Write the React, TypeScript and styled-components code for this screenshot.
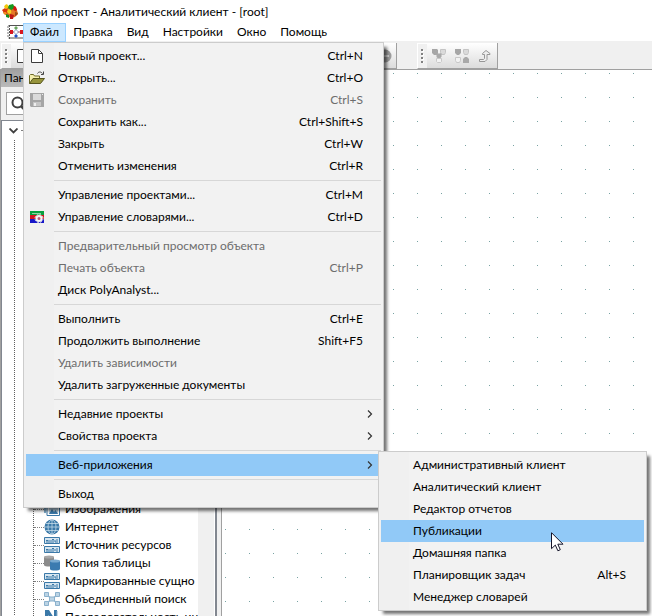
import React from "react";
import styled, { createGlobalStyle, css } from "styled-components";

const GlobalStyle = createGlobalStyle`
  *, *::before, *::after { box-sizing: border-box; }
  body {
    margin: 0;
    overflow: hidden;
    background: #fff;
    color: #000;
    font-family: Lato, "Open Sans", "Noto Sans", sans-serif;
    font-size: 12px;
    line-height: 18px;
  }
  button, input { font: inherit; color: inherit; }
  svg { display: block; flex: none; }
`;

const Window = styled.div`
  display: flex;
  flex-direction: column;
  height: 100vh;
`;

const TitleBar = styled.header`
  display: flex;
  align-items: center;
  gap: 4px;
  height: 23px;
  padding-left: 2px;
  background: #fff;
`;

const Title = styled.h1`
  margin: 0;
  font-size: 12px;
  font-weight: 400;
  white-space: nowrap;
`;

const MenuBar = styled.nav`
  display: flex;
  align-items: center;
  height: 18px;
  padding-left: 7px;
  background: #fff;
`;

const MenuHolder = styled.div`
  position: relative;
`;

const MenuBarButton = styled.button<{ $open?: boolean }>`
  display: block;
  height: 19px;
  padding: 0 6px;
  border: 1px solid ${(p) => (p.$open ? "#99d1ff" : "transparent")};
  background: ${(p) => (p.$open ? "#cce8ff" : "transparent")};
  line-height: 16px;
  white-space: nowrap;
`;

const menuSurface = css`
  position: absolute;
  padding: 2px;
  border: 1px solid #ccc;
  background: linear-gradient(to right, #f0f0f0 30px, #f2f2f2 30px);
  box-shadow: 4px 4px 3px -1px rgba(0, 0, 0, 0.55);
`;

const FileMenu = styled.div`
  ${menuSurface}
  z-index: 2;
  top: 100%;
  left: 0;
  width: 361px;
`;

const SubMenu = styled.div`
  ${menuSurface}
  top: -3px;
  left: calc(100% - 3px);
  width: 269px;
`;

const ItemHolder = styled.div`
  position: relative;
`;

const MenuItem = styled.button<{ $active?: boolean }>`
  display: grid;
  grid-template-columns: 22px 1fr auto;
  column-gap: 10px;
  align-items: center;
  width: 100%;
  height: 22px;
  padding: 0 18px 0 0;
  border: 0;
  background: ${(p) => (p.$active ? "#91c9f7" : "transparent")};
  text-align: left;
  white-space: nowrap;

  &:disabled { color: #6d6d6d; }
`;

const ItemIcon = styled.span`
  display: flex;
  justify-content: center;
`;

const ItemArrow = styled.span`
  display: flex;
  justify-content: flex-end;
  margin-right: -10px;
`;

const Separator = styled.hr`
  height: 1px;
  margin: 3px 0 3px 28px;
  border: 0;
  background: #d7d7d7;
`;

const Pointer = styled.svg`
  position: absolute;
  z-index: 3;
  top: 12px;
  left: 170px;
  pointer-events: none;
`;

const ToolArea = styled.div`
  display: flex;
  gap: 20px;
  height: 29px;
  padding: 2px 0 0 1px;
  border-bottom: 1px solid #a0a0a0;
  background: #f0f0f0;
`;

const ToolBar = styled.div<{ $main?: boolean }>`
  display: flex;
  align-items: center;
  width: ${(p) => (p.$main ? "396px" : "81px")};
  border-right: 1px solid #a0a0a0;
  border-bottom: 1px solid #a0a0a0;
  border-left: 1px solid #fff;
  background: linear-gradient(#fff, #dcdcdc);
`;

const Grip = styled.div`
  display: flex;
  justify-content: center;
  align-items: center;
  width: 9px;
  height: 24px;
  background: #f0f0f0;
`;

const ToolButton = styled.button<{ $last?: boolean }>`
  display: flex;
  align-items: center;
  justify-content: center;
  width: 23px;
  height: 22px;
  margin-left: ${(p) => (p.$last ? "auto" : "0")};
  padding: 0;
  border: 0;
  background: transparent;
`;

const Workspace = styled.main`
  display: flex;
  flex: 1;
  min-height: 0;
`;

const Dock = styled.aside`
  display: flex;
  flex-direction: column;
  flex: none;
  width: 222px;
  background: #f0f0f0;
  border-left: 1px solid #a0a0a0;
  border-right: 1px solid #a0a0a0;
`;

const DockTitle = styled.h2`
  height: 17px;
  margin: 0;
  padding-left: 3px;
  background: linear-gradient(#a2a2a2, #bababa);
  font-size: 12px;
  font-weight: 400;
  line-height: 16px;
`;

const SearchBox = styled.label`
  display: flex;
  align-items: center;
  height: 23px;
  margin: 5px 8px 5px 5px;
  padding-left: 4px;
  border: 1px solid #a0a0a0;
  background: #fff;
`;

const SearchInput = styled.input`
  flex: 1;
  min-width: 0;
  border: 0;
  outline: 0;
  background: transparent;
`;

const TreeFrame = styled.div`
  display: flex;
  flex: 1;
  min-height: 0;
  margin-right: 4px;
  border: 1px solid #828790;
  border-right-width: 2px;
  border-bottom: 0;
`;

const Tree = styled.div`
  flex: 1;
  min-width: 0;
  overflow: hidden;
  background: #fff;
`;

const TreeRoot = styled.div`
  display: flex;
  align-items: center;
  gap: 3px;
  height: 19px;
  padding-left: 7px;
`;

const RootLine = styled.div`
  height: 1px;
  width: 12px;
  border-top: 1px dotted #808080;
`;

const Branch = styled.div`
  height: 100%;
  margin-left: 12px;
  padding-left: 18px;
  border-left: 1px dotted #606060;
`;

const Leaves = styled.ul`
  margin: 0;
  padding: 360px 0 0;
  border-left: 1px dotted #606060;
  list-style: none;
`;

const Leaf = styled.li`
  display: flex;
  align-items: center;
  height: 18px;
  white-space: nowrap;

  &::before {
    content: "";
    flex: none;
    width: 10px;
    border-top: 1px dotted #808080;
  }
`;

const LeafText = styled.span`
  margin-left: 5px;
`;

const ScrollTrack = styled.div`
  flex: none;
  width: 17px;
  background: #f0f0f0;
  border-right: 1px solid #fff;
`;

const Canvas = styled.section`
  flex: 1;
  background-color: #fff;
  background-image: conic-gradient(from 0deg at 1px 1px, transparent 75%, #78a3a3 0);
  background-position: 3px 3px;
  background-size: 24px 24px;
`;

const AppLogo = () => (
  <svg width="17" height="16" viewBox="0 0 17 16" aria-hidden="true">
    <path d="M5 3l3-2 5 1 2 4 1 4-3 3-4 1-4-2-4-3z" fill="#d86a20" />
    <path d="M0 6l3-2 3 2-1 4-3-1z" fill="#d8380c" />
    <path d="M1 8h3l1 2-2 1z" fill="#f08a20" />
    <path d="M3 1 5 0l2 3-3 2-2-2z" fill="#f2c80c" />
    <path d="M7 1l4-1 2 4-4 2-3-2z" fill="#179a20" />
    <path d="M12 2l2 1 1 3-2 1-2-2z" fill="#d41414" />
    <path d="M6 5l3 1 1 3-3 1-2-2z" fill="#f4d020" />
    <path d="M10 6l3 1 1 3-3 1-2-2z" fill="#e87828" />
    <path d="M4 10l3 1v3l-3-1z" fill="#168c20" />
    <path d="M8 10l4 1-1 4H8z" fill="#c01818" />
    <path d="M13 8l3 1-1 2-2 1z" fill="#9a4a18" />
  </svg>
);

const ProjectIcon = () => (
  <svg width="16" height="14" viewBox="0 0 16 14" aria-hidden="true">
    <path d="M1.500.5H16M1.500 13H16" stroke="#555" />
    <path d="M2.500 0v14" stroke="#555" strokeDasharray="2 1" />
    <path d="M0 2h2M0 5h2M0 8h2M0 11h2" stroke="#777" />
    <path d="M5 7h11" stroke="#c44" />
    <path d="M3 5h3v4H3zM13 5h3v4h-3z" fill="#d81820" />
    <path d="M9 1l2 2-2 2-2-2z" fill="#6aa860" />
    <path d="M9 9l2 2-2 2-2-2z" fill="#2050c8" />
    <path d="M9 4.500 11.500 7 9 9.500 6.500 7z" fill="#fff" stroke="#4060a0" strokeWidth=".6" />
  </svg>
);

const PageIcon = () => (
  <svg width="12" height="14" viewBox="0 0 12 14" aria-hidden="true">
    <path d="M.5.5h7l4 4v9H.5z" fill="#fff" stroke="#3c3c3c" />
    <path d="M7.500.5v4h4" fill="none" stroke="#3c3c3c" />
  </svg>
);

const OpenIcon = () => (
  <svg width="16" height="14" viewBox="0 0 16 14" aria-hidden="true">
    <path d="M.5 12.500V4.500l1-1h3l1 1.500h5v3" fill="#f4efae" stroke="#6c6924" />
    <path d="M.5 12.500 4 7.500h11.500l-4 5z" fill="#96943c" stroke="#56541c" />
    <path d="M8.500 2.500C9.500.5 12 .5 13.500 2.500" fill="none" stroke="#444" />
    <path d="M14.500.5v3H12" fill="none" stroke="#444" />
  </svg>
);

const SaveIcon = () => (
  <svg width="14" height="14" viewBox="0 0 14 14" aria-hidden="true">
    <path d="M0 0h14v14H1l-1-1z" fill="#a5a5a5" />
    <path d="M3 1h8v6H3z" fill="#dadada" />
    <path d="M3 9h8v4H3z" fill="#c5c5c5" />
    <path d="M4 10h2v3H4zM12 1h1v1h-1z" fill="#eee" />
  </svg>
);

const DictionaryIcon = () => (
  <svg width="14" height="12" viewBox="0 0 14 12" aria-hidden="true">
    <path d="M0 0h14v4H0z" fill="#08a040" />
    <path d="M0 4h14v4H0z" fill="#d21420" />
    <path d="M0 8h14v4H0z" fill="#1616c8" />
    <path d="M2 2.500h9" stroke="#8fd4a4" />
    <circle cx="9" cy="7.500" r="4" fill="none" stroke="#ddd" strokeDasharray="2 1.140" />
    <circle cx="9" cy="7.500" r="2.500" fill="#bb5878" stroke="#f4f4f4" strokeWidth="2" />
  </svg>
);

const Arrow = () => (
  <svg width="6" height="8" viewBox="0 0 6 8" aria-hidden="true">
    <path d="m1 .5 3.500 3.500L1 7.500" fill="none" stroke="#333" strokeWidth="1.200" />
  </svg>
);

const GripDots = () => (
  <svg width="3" height="14" viewBox="0 0 3 14" aria-hidden="true">
    <path d="M1 1h2v2H1zM1 5h2v2H1zM1 9h2v2H1zM1 13h2v1H1z" fill="#fff" />
    <path d="M0 0h2v2H0zM0 4h2v2H0zM0 8h2v2H0zM0 12h2v2H0z" fill="#808080" />
  </svg>
);

const MergeIcon = () => (
  <svg width="14" height="14" viewBox="0 0 14 14" aria-hidden="true">
    <path d="M3 3l4 4 4-4M7 7v4" stroke="#b4b4b4" strokeWidth="2" fill="none" />
    <path d="M0 0h5l1 1v3L5 6H2L0 4z" fill="#a6a6a6" />
    <path d="M8.500.5h5v3l-1 2h-3l-1-2z" fill="#dadada" stroke="#c4c4c4" />
    <path d="M4.500 4.500h5v3l-1 1.500h-3l-1-1z" fill="#a9a9a9" />
    <path d="M4.500 9.500h5v3l-1 1h-3l-1-1z" fill="#f2f2f2" stroke="#c8c8c8" />
  </svg>
);

const NodesIcon = () => (
  <svg width="14" height="14" viewBox="0 0 14 14" aria-hidden="true">
    <path d="M0 0h6v4L4 6H2L0 4z" fill="#a6a6a6" />
    <path d="M8.500.5h5v3l-1 2h-3l-1-2z" fill="#dadada" stroke="#c4c4c4" />
    <path d="M.5 8.500h5v3l-1 2h-3l-1-2z" fill="#f2f2f2" stroke="#c8c8c8" />
    <path d="M10 8h2l2 2v4H8v-4z" fill="#a9a9a9" />
  </svg>
);

const UpIcon = () => (
  <svg width="12" height="12" viewBox="0 0 12 12" aria-hidden="true">
    <path d="M.5 11.500v-2h4l1-1v-4h-2v-1l3.500-3 4 3v1h-3v5l-2 2z" fill="#eee" stroke="#969696" />
  </svg>
);

const StopIcon = () => (
  <svg width="14" height="14" viewBox="0 0 14 14" aria-hidden="true">
    <circle cx="7" cy="7" r="6.500" fill="#9c9c9c" />
    <path d="M3 7h8" stroke="#d0d0d0" strokeWidth="2" />
  </svg>
);

const SearchIcon = () => (
  <svg width="15" height="15" viewBox="0 0 15 15" aria-hidden="true">
    <circle cx="6.500" cy="6.500" r="5" fill="none" stroke="#404040" strokeWidth="2" />
    <path d="m10 10 4 4" stroke="#404040" strokeWidth="2.500" />
  </svg>
);

const ExpandIcon = () => (
  <svg width="9" height="6" viewBox="0 0 9 6" aria-hidden="true">
    <path d="m.5.5 4 4 4-4" fill="none" stroke="#404040" strokeWidth="1.800" />
  </svg>
);

const ImagesIcon = () => (
  <svg width="16" height="16" viewBox="0 0 16 16" aria-hidden="true">
    <path d="M0 3h2v9H0z" fill="#7eabc9" />
    <path d="M3 2h12.500v12.500H3z" fill="#fff" stroke="#3b79a8" />
    <path d="M5 4h9v9H5z" fill="#b9d2e3" />
    <path d="m5 13 3-5 2 3 1.500-2 2.500 4z" fill="#3b79a8" />
  </svg>
);

const GlobeIcon = () => (
  <svg width="16" height="16" viewBox="0 0 16 16" aria-hidden="true">
    <circle cx="8" cy="8" r="7.500" fill="#3b79a8" />
    <g fill="none" stroke="#c4dae8" strokeWidth=".8">
      <path d="M8 1v14M1 8h14M2 4.500h12M2 11.500h12" />
      <ellipse cx="8" cy="8" rx="4" ry="7" />
    </g>
  </svg>
);

const EntityIcon = () => (
  <svg width="16" height="16" viewBox="0 0 16 16" aria-hidden="true">
    <path d="M.5.500h15v6H.5zM.5 9.500h15v6H.5z" fill="#d7e6f0" stroke="#3b79a8" />
    <path d="M2 3.500h2M2 5h2M5 3v3M7 3v3M8 2.500h2M9 2v4M11 3v2h1M13 2v4M2 12.500h2M2 14h2M5 12v3M7 12v3M8 11.500h2M9 11v4M11 12v2M13 11v4" fill="none" stroke="#3b79a8" />
  </svg>
);

const TablesIcon = () => (
  <svg width="16" height="16" viewBox="0 0 16 16" aria-hidden="true">
    <path d="M0 2v8c0 2 10 2 10 0V2z" fill="#8b8b8b" />
    <ellipse cx="5" cy="2" rx="5" ry="1.500" fill="#a8a8a8" />
    <path d="M6 6v8c0 2 10 2 10 0V6z" fill="#3b7bb0" />
    <ellipse cx="11" cy="6" rx="5" ry="1.500" fill="#78a9cf" />
  </svg>
);

const FederatedIcon = () => (
  <svg width="16" height="14" viewBox="0 0 16 14" aria-hidden="true">
    <path d="m3 3 10 8M13 3 3 11" stroke="#8bb1cc" strokeWidth="1.500" />
    <path d="M.5.500h4v4h-4zM11.500.500h4v4h-4zM.5 9.500h4v4h-4zM11.500 9.500h4v4h-4zM5.500 5h5v4h-5z" fill="#bcd4e5" stroke="#8bb1cc" />
  </svg>
);

const SequenceIcon = () => (
  <svg width="16" height="16" viewBox="0 0 16 16" aria-hidden="true">
    <path d="M1 1h4l5 8V1h3v14h-3L4 6v9H1z" fill="#3b79a8" />
    <path d="M13 2v12" stroke="#8bb1cc" />
  </svg>
);

interface Entry {
  label: string;
  keys?: string;
  icon?: React.ReactNode;
  disabled?: boolean;
  children?: Entry[] | true;
}

const webApps: Entry[] = [
  { label: "Административный клиент" },
  { label: "Аналитический клиент" },
  { label: "Редактор отчетов" },
  { label: "Публикации" },
  { label: "Домашняя папка" },
  { label: "Планировщик задач", keys: "Alt+S" },
  { label: "Менеджер словарей" },
];

const fileGroups: Entry[][] = [
  [
    { label: "Новый проект...", keys: "Ctrl+N", icon: <PageIcon /> },
    { label: "Открыть...", keys: "Ctrl+O", icon: <OpenIcon /> },
    { label: "Сохранить", keys: "Ctrl+S", icon: <SaveIcon />, disabled: true },
    { label: "Сохранить как...", keys: "Ctrl+Shift+S" },
    { label: "Закрыть", keys: "Ctrl+W" },
    { label: "Отменить изменения", keys: "Ctrl+R" },
  ],
  [
    { label: "Управление проектами...", keys: "Ctrl+M" },
    { label: "Управление словарями...", keys: "Ctrl+D", icon: <DictionaryIcon /> },
  ],
  [
    { label: "Предварительный просмотр объекта", disabled: true },
    { label: "Печать объекта", keys: "Ctrl+P", disabled: true },
    { label: "Диск PolyAnalyst..." },
  ],
  [
    { label: "Выполнить", keys: "Ctrl+E" },
    { label: "Продолжить выполнение", keys: "Shift+F5" },
    { label: "Удалить зависимости", disabled: true },
    { label: "Удалить загруженные документы" },
  ],
  [
    { label: "Недавние проекты", children: true },
    { label: "Свойства проекта", children: true },
  ],
  [{ label: "Веб-приложения", children: webApps }],
  [{ label: "Выход" }],
];

const leaves = [
  { label: "Изображения", icon: <ImagesIcon /> },
  { label: "Интернет", icon: <GlobeIcon /> },
  { label: "Источник ресурсов", icon: <EntityIcon /> },
  { label: "Копия таблицы", icon: <TablesIcon /> },
  { label: "Маркированные сущно", icon: <EntityIcon /> },
  { label: "Объединенный поиск", icon: <FederatedIcon /> },
  { label: "Последовательность ин", icon: <SequenceIcon /> },
];

const MenuEntry = ({ entry, active }: { entry: Entry; active?: boolean }) => (
  <MenuItem type="button" role="menuitem" disabled={entry.disabled} $active={active}>
    <ItemIcon>{entry.icon}</ItemIcon>
    <span>{entry.label}</span>
    {entry.children ? <ItemArrow><Arrow /></ItemArrow> : <span>{entry.keys}</span>}
  </MenuItem>
);

export default function App() {
  return (
    <Window>
      <GlobalStyle />
      <TitleBar>
        <AppLogo />
        <Title>Мой проект - Аналитический клиент - [root]</Title>
      </TitleBar>
      <MenuBar>
        <ProjectIcon />
        <MenuHolder>
          <MenuBarButton type="button" $open aria-expanded="true">Файл</MenuBarButton>
          <FileMenu role="menu" aria-label="Файл">
            {fileGroups.map((group, index) => (
              <React.Fragment key={group[0].label}>
                {index > 0 && <Separator />}
                {group.map((entry) => (
                  <ItemHolder key={entry.label}>
                    <MenuEntry entry={entry} active={Array.isArray(entry.children)} />
                    {Array.isArray(entry.children) && (
                      <SubMenu role="menu" aria-label={entry.label}>
                        {entry.children.map((child) => (
                          <ItemHolder key={child.label}>
                            <MenuEntry entry={child} active={child.label === "Публикации"} />
                            {child.label === "Публикации" && (
                              <Pointer width="13" height="20" viewBox="0 0 13 20" aria-hidden="true">
                                <path
                                  d="M.5.7v16l3.800-3.600 2.600 5.700 2.400-1.100-2.500-5.500h5.200z"
                                  fill="#fff"
                                  stroke="#15152a"
                                />
                              </Pointer>
                            )}
                          </ItemHolder>
                        ))}
                      </SubMenu>
                    )}
                  </ItemHolder>
                ))}
              </React.Fragment>
            ))}
          </FileMenu>
        </MenuHolder>
        {["Правка", "Вид", "Настройки", "Окно", "Помощь"].map((name) => (
          <MenuBarButton type="button" key={name}>{name}</MenuBarButton>
        ))}
      </MenuBar>
      <ToolArea>
        <ToolBar $main>
          <Grip><GripDots /></Grip>
          <ToolButton type="button" aria-label="Новый проект"><PageIcon /></ToolButton>
          <ToolButton type="button" aria-label="Остановить" $last><StopIcon /></ToolButton>
        </ToolBar>
        <ToolBar>
          <Grip><GripDots /></Grip>
          <ToolButton type="button" aria-label="Объединить узлы"><MergeIcon /></ToolButton>
          <ToolButton type="button" aria-label="Упорядочить узлы"><NodesIcon /></ToolButton>
          <ToolButton type="button" aria-label="На уровень выше"><UpIcon /></ToolButton>
        </ToolBar>
      </ToolArea>
      <Workspace>
        <Dock>
          <DockTitle>Панель</DockTitle>
          <SearchBox>
            <SearchIcon />
            <SearchInput type="text" aria-label="Поиск" />
          </SearchBox>
          <TreeFrame>
            <Tree>
              <TreeRoot>
                <ExpandIcon />
                <RootLine />
              </TreeRoot>
              <Branch>
                <Leaves>
                  {leaves.map((leaf) => (
                    <Leaf key={leaf.label}>
                      {leaf.icon}
                      <LeafText>{leaf.label}</LeafText>
                    </Leaf>
                  ))}
                </Leaves>
              </Branch>
            </Tree>
            <ScrollTrack />
          </TreeFrame>
        </Dock>
        <Canvas aria-label="Рабочая область" />
      </Workspace>
    </Window>
  );
}
